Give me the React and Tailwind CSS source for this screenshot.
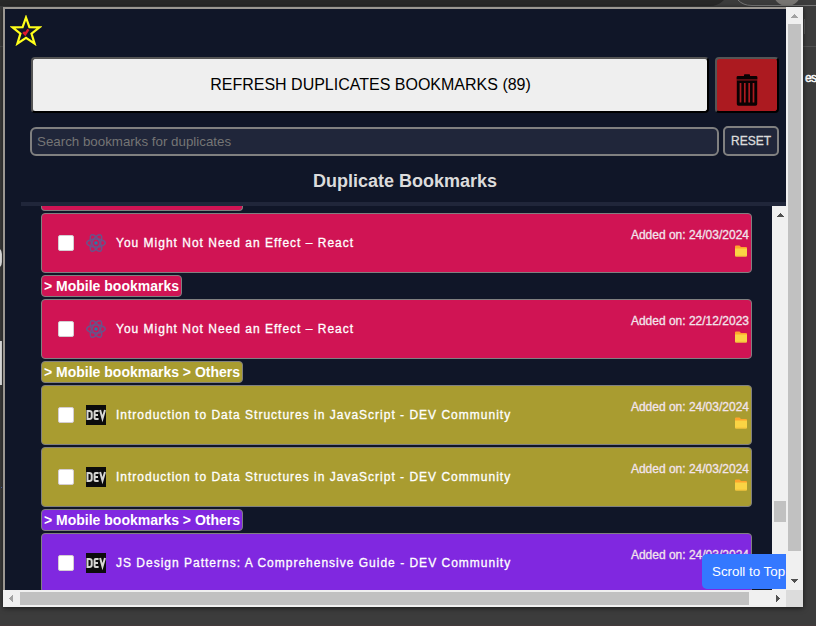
const PINK = 'bg-[#d01454]';
const OLIVE = 'bg-[#a99c30]';
const VIOLET = 'bg-[#8028e0]';

const items = [
  { kind: 'card', tone: PINK, icon: 'react', text: 'You Might Not Need an Effect – React', date: '24/03/2024' },
  { kind: 'tag', tone: PINK, text: '> Mobile bookmarks' },
  { kind: 'card', tone: PINK, icon: 'react', text: 'You Might Not Need an Effect – React', date: '22/12/2023' },
  { kind: 'tag', tone: OLIVE, text: '> Mobile bookmarks > Others' },
  { kind: 'card', tone: OLIVE, icon: 'dev', text: 'Introduction to Data Structures in JavaScript - DEV Community', date: '24/03/2024' },
  { kind: 'card', tone: OLIVE, icon: 'dev', text: 'Introduction to Data Structures in JavaScript - DEV Community', date: '24/03/2024' },
  { kind: 'tag', tone: VIOLET, text: '> Mobile bookmarks > Others' },
  { kind: 'card', tone: VIOLET, icon: 'dev', text: 'JS Design Patterns: A Comprehensive Guide - DEV Community', date: '24/03/2024' },
];

function StarLogo() {
  return (
    <svg className="block h-[31px] w-[32px]" viewBox="0 0 32 31">
      <path d="M16 2.5 L19.4 12.2 L29.5 12.4 L21.5 18.6 L24.6 28.6 L16 22.8 L7.4 28.6 L10.4 18.6 L2.5 12.4 L12.6 12.2 Z" fill="none" stroke="#ffff1a" strokeWidth="2.2" />
      <path d="M13.2 17.2 L15.2 19.2 L18.4 14.4" fill="none" stroke="#e0182c" strokeWidth="2.5" />
    </svg>
  );
}

function TrashIcon() {
  return (
    <svg className="block h-[32px] w-[22px]" viewBox="0 0 22 32">
      <path d="M8 2 V1 Q8 0.3 8.8 0.3 H13.2 Q14 0.3 14 1 V2 H20 Q21.4 2 21.4 3.2 V5 H0.6 V3.2 Q0.6 2 2 2 Z" fill="#0a0203" />
      <path d="M0.6 5 H21.4 V6.4 H0.6 Z" fill="#5e0d12" />
      <path d="M0.8 6.4 H21.2 V30 Q21.2 31.8 19.5 31.8 H2.5 Q0.8 31.8 0.8 30 Z" fill="#0a0203" />
      <path d="M4.5 9 V28.4 M8.8 9 V28.4 M13.2 9 V28.4 M17.5 9 V28.4" stroke="#ac1a20" strokeWidth="1.7" />
    </svg>
  );
}

function ReactIcon() {
  return (
    <svg className="block size-5 shrink-0" viewBox="0 0 20 20" fill="none" stroke="#6b5289" strokeWidth="1.5">
      <ellipse cx="10" cy="10" rx="9.3" ry="3.9" />
      <ellipse cx="10" cy="10" rx="9.3" ry="3.9" transform="rotate(60 10 10)" />
      <ellipse cx="10" cy="10" rx="9.3" ry="3.9" transform="rotate(120 10 10)" />
      <circle cx="10" cy="10" r="1.8" fill="#277ba5" stroke="none" />
    </svg>
  );
}

function DevIcon() {
  return (
    <svg className="block size-5 shrink-0 bg-[#0c0c0c]" viewBox="0 0 20 20" fill="none" stroke="#d6d6d2" strokeWidth="2">
      <path d="M1.5 6 V14 H3.2 Q5.7 14 5.7 12 V8 Q5.7 6 3.2 6 Z" />
      <path d="M12.6 6 H9.6 Q8.6 6 8.6 7 V13 Q8.6 14 9.6 14 H12.6 M8.6 10 H12" />
      <path d="M14.1 5 L16.5 13.6 L19 5" />
    </svg>
  );
}

function FolderIcon() {
  return (
    <svg className="mr-[2px] block h-[12px] w-[12px]" viewBox="0 0 12 12">
      <path d="M0 1.5 Q0 0.5 1 0.5 H4.5 L6 2 H11 Q12 2 12 3 V5 H0 Z" fill="#ffa52c" />
      <path d="M0 3.6 H12 V10.5 Q12 11.4 11 11.4 H1 Q0 11.4 0 10.5 Z" fill="#fad444" />
      <path d="M0.5 11 H11.5" stroke="#f3bd3a" strokeWidth="0.9" />
    </svg>
  );
}

function Arrow({ d, light }) {
  return (
    <svg className="block size-[17px] shrink-0" viewBox="0 0 17 17" shapeRendering="crispEdges">
      <path d={d} fill={light ? '#a3a3a3' : '#505050'} />
    </svg>
  );
}

const UP = 'M5 11 L8.5 7 L12 11 Z';
const DOWN = 'M5 6 L8.5 10 L12 6 Z';
const LEFT = 'M10 5 L6 8.5 L10 12 Z';
const RIGHT = 'M7 5 L11 8.5 L7 12 Z';

function Tag({ tone, text }) {
  return (
    <div className={`flex h-[22px] shrink-0 items-center self-start whitespace-nowrap rounded-[4px] border border-[#808080] px-[2px] text-[14px] font-bold text-white ${tone}`}>
      {text}
    </div>
  );
}

function Card({ tone, icon, text, date }) {
  return (
    <div className={`flex h-[60px] shrink-0 items-center rounded-[4px] border border-[#808080] pl-[16px] pr-[2px] ${tone}`}>
      <span className="mr-[12px] block size-4 shrink-0 rounded-[2px] border border-[#d4cdd2] bg-white" />
      {icon === 'react' ? <ReactIcon /> : <DevIcon />}
      <span className="ml-[10px] grow whitespace-nowrap pt-px text-[12px] leading-[15px] tracking-[1px] text-white [-webkit-text-stroke:0.3px]">{text}</span>
      <span className="flex flex-col items-end gap-[3px] whitespace-nowrap pb-px text-[12px] leading-[14px] text-[#f2e4ec] [-webkit-text-stroke:0.3px]">
        Added on: {date}
        <FolderIcon />
      </span>
    </div>
  );
}

function Backdrop() {
  return (
    <svg className="absolute inset-0" width="816" height="626" viewBox="0 0 816 626">
      <rect width="816" height="626" fill="#3c3c3c" />
      <path d="M0 0 H724 Q718 6 710 6 H0 Z" fill="#282828" />
      <path d="M0 46.5 H3 M803 46.5 H816" stroke="#505050" />
      <path d="M738 0 Q743 5.5 752 5.5 H816" fill="none" stroke="#777" />
      <circle cx="787" cy="-8" r="14" fill="#777572" />
      <path d="M804.5 19 V34" stroke="#5b5b5b" />
      <rect x="-12" y="247" width="14" height="22" rx="7" fill="#eee" />
      <rect x="0" y="341" width="2" height="44" fill="#eee" />
      <rect x="1" y="487" width="1" height="1" fill="#5870c0" />
      <path d="M0 625.5 H816" stroke="#443a3b" />
    </svg>
  );
}

export default function App() {
  return (
    <div className="relative h-[626px] w-[816px] overflow-hidden pl-[3px] pt-[7px] font-['Liberation_Sans',Arial,sans-serif]">
      <Backdrop />
      <span className="absolute left-[805px] top-[71px] text-[12px] leading-[15px] tracking-[-0.6px] text-white [-webkit-text-stroke:0.5px]">es</span>
      <div className="relative grid h-[600px] w-[800px] grid-cols-[783px_17px] grid-rows-[583px_17px] shadow-[0_1px_5px_rgba(0,0,0,0.6)]">
        <main className="relative flex flex-col overflow-hidden border-l-2 border-t-2 border-[#9b9792] bg-[#101628]">
          <header className="h-[48px] shrink-0 pl-[5px] pt-[6px]">
            <StarLogo />
          </header>

          <div className="flex shrink-0 gap-[6px] pl-[26px]">
            <button className="h-[56px] w-[678px] rounded-[4px] border-2 border-b-black border-l-[#555] border-r-black border-t-[#555] bg-[#efefef] pl-px text-[16px] text-black">
              REFRESH DUPLICATES BOOKMARKS (89)
            </button>
            <button className="flex h-[56px] w-[64px] justify-center rounded-[4px] border-2 border-b-black border-l-[#555] border-r-black border-t-[#555] bg-[#ac1a20] pr-px pt-[15px]">
              <TrashIcon />
            </button>
          </div>

          <div className="mt-[13px] flex shrink-0 items-end gap-[4px] pl-[25px]">
            <div className="flex h-[29px] w-[689px] items-center rounded-[6px] border-2 border-[#808080] bg-[#20263a] pl-[5px] text-[13.33px] text-[#757575]">
              Search bookmarks for duplicates
            </div>
            <button className="h-[30px] w-[56px] rounded-[5px] border-2 border-[#808080] bg-[#20263a] text-[12px] text-[#dcdcdc] [-webkit-text-stroke:0.3px]">
              RESET
            </button>
          </div>

          <h1 className="ml-[19px] flex h-[46px] shrink-0 items-center justify-center pt-[4px] text-[18px] font-bold text-[#dcdcdc]">
            Duplicate Bookmarks
          </h1>
          <div className="ml-[16px] h-[4px] shrink-0 bg-[#20263a]" />

          <div className="flex h-[384px] shrink-0 overflow-hidden pl-[36px]">
            <div className="flex w-[711px] shrink-0 flex-col gap-[2px]">
              <div className={`h-[5px] w-[202px] shrink-0 rounded-b-[4px] border border-t-0 border-[#808080] ${PINK}`} />
              {items.map((item, i) =>
                item.kind === 'tag' ? <Tag key={i} {...item} /> : <Card key={i} {...item} />
              )}
            </div>
            <div className="ml-[20px] flex w-[17px] shrink-0 flex-col bg-[#f0f0f0]">
              <Arrow d={UP} />
              <div className="ml-[2px] mt-[278px] h-[21px] w-[13px] bg-[#c1c1c1]" />
            </div>
          </div>

          <button className="absolute left-[697px] top-[545px] h-[35px] whitespace-nowrap rounded-[5px] bg-[#3478ff] px-[10px] text-[13.33px] text-white">
            Scroll to Top
          </button>
        </main>

        <div className="flex flex-col bg-[#f0f0f0]">
          <Arrow d={UP} light />
          <div className="ml-[2px] h-[527px] w-[13px] shrink-0 bg-[#c1c1c1]" />
          <div className="mt-auto">
            <Arrow d={DOWN} />
          </div>
        </div>

        <div className="flex items-center bg-[#f0f0f0]">
          <Arrow d={LEFT} light />
          <div className="h-[13px] w-[729px] shrink-0 bg-[#c1c1c1]" />
          <div className="ml-auto">
            <Arrow d={RIGHT} />
          </div>
        </div>
        <div className="bg-[#dcdcdc]" />
      </div>
    </div>
  );
}
